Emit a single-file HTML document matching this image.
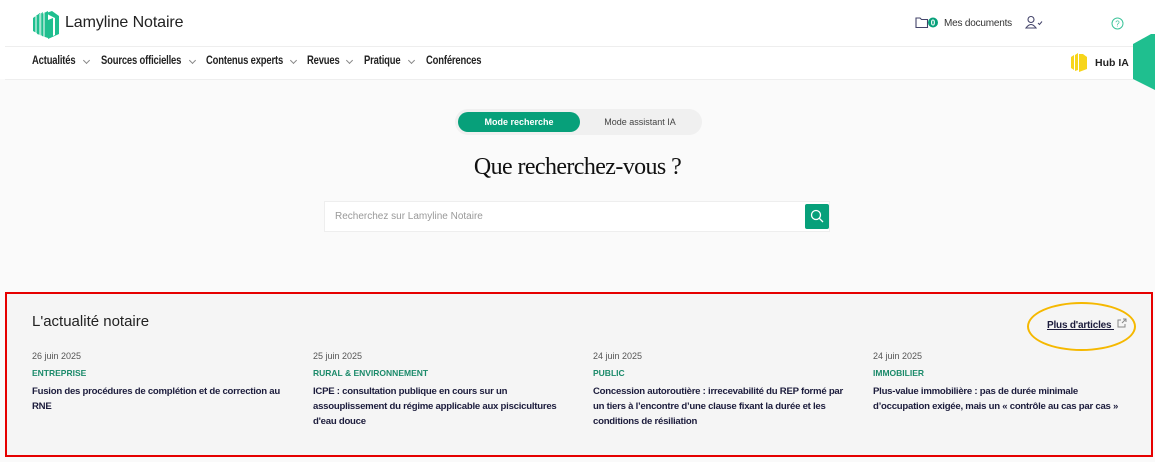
<!DOCTYPE html>
<html><head><meta charset="utf-8"><style>
*{margin:0;padding:0;box-sizing:border-box}
body{width:1155px;height:462px;overflow:hidden;background:#fafafa;font-family:"Liberation Sans",Arial,sans-serif;position:relative;color:#1e1e2e}
.hdr{position:absolute;left:0;top:0;width:1155px;height:79px;background:#fff}
.l1{position:absolute;left:5px;right:0;top:46px;border-top:1px solid #eee}
.l2{position:absolute;left:5px;right:0;top:79px;border-top:1px solid #eee}
.logo{position:absolute;left:32px;top:10px}
.brand{position:absolute;left:65px;top:14px;font-size:16px;color:#222;letter-spacing:-0.1px}
.ni{position:absolute;top:55px;font-size:11.5px;font-weight:bold;color:#222;letter-spacing:-0.2px;white-space:nowrap;transform:scaleX(0.82);transform-origin:left}
.chev{position:absolute;top:58px;width:5px;height:5px;border-right:1px solid #888;border-bottom:1px solid #888;transform:rotate(45deg)}
.sm{position:absolute;font-size:10px;color:#333}
.toggle{position:absolute;left:455px;top:109px;width:247px;height:26px;background:#f0f0f0;border-radius:13px}
.on{position:absolute;left:3px;top:3px;width:122px;height:20px;background:#07a07a;border-radius:10px;color:#fff;font-size:9px;font-weight:bold;text-align:center;line-height:20px}
.off{position:absolute;left:130px;top:3px;width:110px;line-height:20px;font-size:9px;color:#444;text-align:center}
h1{position:absolute;left:0;width:1155px;top:154px;text-align:center;font-family:"Liberation Serif",serif;font-weight:normal;font-size:24px;color:#111;letter-spacing:-0.6px}
.search{position:absolute;left:324px;top:201px;width:506px;height:31px;background:#fff;border:1px solid #eee}
.search span{position:absolute;left:10px;top:9px;font-size:10px;color:#999}
.sbtn{position:absolute;right:0;top:2px;width:24px;height:25px;background:#07a07a;border-radius:2px}
.box{position:absolute;left:5px;top:292px;width:1148px;height:165px;border:2px solid #e60000;background:#f5f5f5}
.box h2{position:absolute;left:25px;top:19px;font-size:15px;font-weight:normal;color:#222}
.col{position:absolute;top:57px;width:270px}
.d{font-size:9px;color:#555}
.c{font-size:8.5px;color:#1b8a6a;font-weight:bold;margin-top:7px}
.t{font-size:9.6px;font-weight:bold;color:#1c1c3c;margin-top:6px;line-height:15px;letter-spacing:-0.25px}
.more{position:absolute;left:1040px;top:24px;font-size:10px;color:#1c1c3c;text-decoration:underline;font-weight:bold;letter-spacing:-0.2px}
.ell{position:absolute;left:1027px;top:302px;width:109px;height:49px;border:2.5px solid #f5b800;border-radius:50%}
</style></head><body>
<div class="hdr"></div><div class="l1"></div><div class="l2"></div>
<svg class="logo" width="28" height="30" viewBox="0 0 28 30"><g fill="#1fbf8f"><path d="M1 8 L8 3 L8 25 L1 21Z"/><path d="M5 6 L11 2 L11 26 L5 24Z" opacity=".8"/><path d="M10 4 L16 1 L16 28 L10 26Z"/><path d="M14 3 L20 1 L27 6 L27 24 L16 29 L16 10 L21 8 L21 26 L23 25 L23 8 L17 5Z"/></g><g stroke="#fff" stroke-width="1"><path d="M4 6 L4 23 M8 4 L8 25 M12 3 L12 27"/></g></svg>
<div class="brand">Lamyline Notaire</div>
<div class="ni" style="left:32px">Actualités</div><i class="chev" style="left:84px"></i>
<div class="ni" style="left:101px">Sources officielles</div><i class="chev" style="left:190px"></i>
<div class="ni" style="left:206px">Contenus experts</div><i class="chev" style="left:291px"></i>
<div class="ni" style="left:307px">Revues</div><i class="chev" style="left:347px"></i>
<div class="ni" style="left:364px">Pratique</div><i class="chev" style="left:409px"></i>
<div class="ni" style="left:426px">Conférences</div>
<svg style="position:absolute;left:915px;top:16px" width="24" height="13"><path d="M1 2 h4 l1.5 1.5 h6 v8 h-11.5z" fill="none" stroke="#44446a" stroke-width="1.1"/><circle cx="18" cy="6.5" r="5" fill="#07a07a"/><text x="18" y="9.5" font-size="8" fill="#fff" text-anchor="middle" font-family="Liberation Sans" font-weight="bold">0</text></svg>
<div class="sm" style="left:944px;top:18px;letter-spacing:-0.2px">Mes documents</div>
<svg style="position:absolute;left:1025px;top:15px" width="18" height="14"><circle cx="6" cy="4.5" r="3" fill="none" stroke="#44446a" stroke-width="1.1"/><path d="M1 13 q5 -7 10 0z" fill="none" stroke="#44446a" stroke-width="1.1"/><path d="M13 8 l1.5 1.5 l2.5 -3" fill="none" stroke="#44446a" stroke-width="1"/></svg>
<svg style="position:absolute;left:1111px;top:17px" width="13" height="13"><circle cx="6.5" cy="6.5" r="5.5" fill="none" stroke="#3cc39a" stroke-width="1"/><text x="6.5" y="9.5" font-size="8" fill="#3cc39a" text-anchor="middle" font-family="Liberation Sans">?</text></svg>
<svg style="position:absolute;left:1070px;top:53px" width="18" height="20"><g fill="#f7d51a"><path d="M1 4 l3-2 v15 l-3-2z"/><path d="M5 2 l3-2 v17 l-3 1z"/><path d="M9 1 l4 0 l4 3 v12 l-8 3z"/></g></svg>
<div class="sm" style="left:1095px;top:57px;font-weight:bold;color:#222;font-size:10.5px">Hub IA</div>
<svg style="position:absolute;left:1133px;top:34px" width="22" height="56"><path d="M0 10 L18 0 L22 0 L22 56 L0 45Z" fill="#1fbf8f"/></svg>
<div class="toggle"><div class="on">Mode recherche</div><div class="off">Mode assistant IA</div></div>
<h1>Que recherchez-vous ?</h1>
<div class="search"><span>Recherchez sur Lamyline Notaire</span><div class="sbtn"><svg width="24" height="25"><circle cx="11" cy="11" r="4.5" fill="none" stroke="#fff" stroke-width="1.3"/><path d="M14.3 14.3 L18 18" stroke="#fff" stroke-width="1.3"/></svg></div></div>
<div class="box"><h2>L'actualité notaire</h2>
<div class="more">Plus d'articles <svg width="10" height="10" style="margin-left:3px"><path d="M6 1h3v3M9 1L5 5M4 2H1v7h7V6" fill="none" stroke="#888" stroke-width="1"/></svg></div>
<div class="col" style="left:25px"><div class="d">26 juin 2025</div><div class="c">ENTREPRISE</div><div class="t">Fusion des procédures de complétion et de correction au<br>RNE</div></div>
<div class="col" style="left:306px"><div class="d">25 juin 2025</div><div class="c">RURAL &amp; ENVIRONNEMENT</div><div class="t">ICPE : consultation publique en cours sur un<br>assouplissement du régime applicable aux piscicultures<br>d'eau douce</div></div>
<div class="col" style="left:586px"><div class="d">24 juin 2025</div><div class="c">PUBLIC</div><div class="t">Concession autoroutière : irrecevabilité du REP formé par<br>un tiers à l’encontre d’une clause fixant la durée et les<br>conditions de résiliation</div></div>
<div class="col" style="left:866px"><div class="d">24 juin 2025</div><div class="c">IMMOBILIER</div><div class="t">Plus-value immobilière : pas de durée minimale<br>d’occupation exigée, mais un « contrôle au cas par cas »</div></div>
</div>
<div class="ell"></div>
</body></html>
